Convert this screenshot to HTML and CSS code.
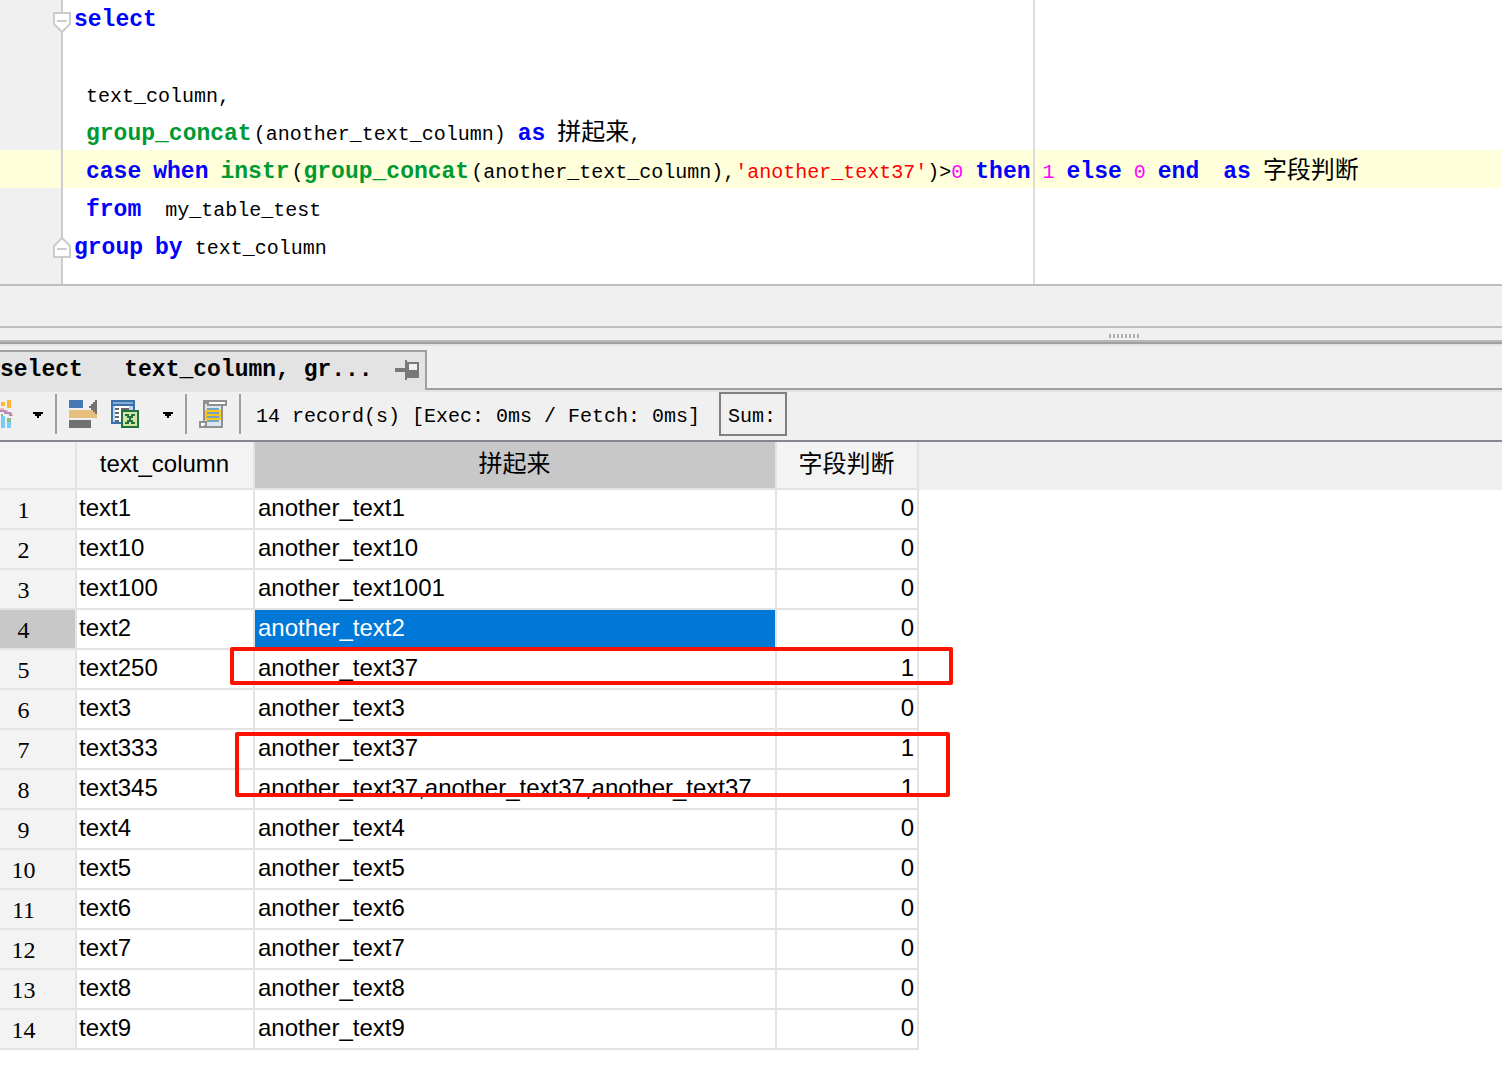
FILE: index.html
```html
<!DOCTYPE html>
<html lang="zh-CN">
<head>
    <meta charset="UTF-8">
    <meta name="viewport" content="width=device-width, initial-scale=1.0">
    <title>SQL Editor</title>
    <link rel="stylesheet" href="styles.css">
</head>
<body>

    <!-- SQL Editor -->
    <div class="editor">
        <div class="line">
            <div class="gutter">
                <svg class="fold" width="18" height="22" viewBox="0 0 18 22"><path d="M1 1h16v11l-8 8-8-8z" fill="#fff" stroke="#ccc" stroke-width="2"/><path d="M4 9h10" stroke="#ccc" stroke-width="2"/></svg>
            </div>
            <code><b class="kw">select</b></code>
        </div>
        <div class="line"><div class="gutter"></div><code></code></div>
        <div class="line"><div class="gutter"></div><code> text_column,</code></div>
        <div class="line"><div class="gutter"></div><code> <b class="fn">group_concat</b>(another_text_column) <b class="kw">as</b> <span class="cjk">拼起来</span>,</code></div>
        <div class="line current"><div class="gutter"></div><code> <b class="kw">case</b> <b class="kw">when</b> <b class="fn">instr</b>(<b class="fn">group_concat</b>(another_text_column),<span class="str">'another_text37'</span>)&gt;<span class="num">0</span> <b class="kw">then</b> <span class="num">1</span> <b class="kw">else</b> <span class="num">0</span> <b class="kw">end</b>  <b class="kw">as</b> <span class="cjk">字段判断</span></code></div>
        <div class="line"><div class="gutter"></div><code> <b class="kw">from</b>  my_table_test</code></div>
        <div class="line">
            <div class="gutter">
                <svg class="fold fold-end" width="18" height="22" viewBox="0 0 18 22"><path d="M1 21h16V10L9 2l-8 8z" fill="#fff" stroke="#ccc" stroke-width="2"/><path d="M4 13h10" stroke="#ccc" stroke-width="2"/></svg>
            </div>
            <code><b class="kw">group</b> <b class="kw">by</b> text_column</code>
        </div>
        <div class="line last"><div class="gutter"></div></div>
        <div class="right-margin"></div>
    </div>

    <div class="scroll-area"></div>
    <div class="splitter">
        <svg width="30" height="4" viewBox="0 0 30 4"><path d="M0 2h30" stroke="#b0b0b0" stroke-width="4" stroke-dasharray="2 2"/></svg>
    </div>

    <!-- Result Tab -->
    <div class="tabs">
        <button class="tab"><span>select   text_column, gr...</span><svg width="24" height="20" viewBox="0 0 24 20"><path d="M0 8h10v4H0z" fill="#787878"/><path d="M10 0h2v20h-2z" fill="#787878"/><path d="M12 2h12v16H12z" fill="#787878"/><path d="M14 4h8v6h-8z" fill="#f0f0f0"/></svg></button>
        <div class="tab-rest"></div>
    </div>

    <!-- Toolbar -->
    <div class="toolbar">
        <button class="chart-btn" aria-label="Chart">
            <svg width="13" height="28" viewBox="0 0 13 28">
                <path d="M1 2h4v4H1zM7 0h4v8H7z" fill="#ffb636"/>
                <path d="M0 9h3v2h4v2h4v2h2" fill="none" stroke="#f1b4ae" stroke-width="2"/>
                <path d="M0 11h5v2h5v2h2" fill="none" stroke="#b08bb9" stroke-width="2"/>
                <path d="M1 14h2v2H1zM7 18h4v4H7z" fill="#84bd86"/>
                <path d="M1 16h4v12H1zM7 22h4v6H7z" fill="#7ccbf7"/>
            </svg>
        </button>
        <button class="drop-btn" aria-label="Chart options"><svg width="10" height="6" viewBox="0 0 10 6"><path d="M0 0h10v2H8v2H6v2H4V4H2V2H0z"/></svg></button>
        <div class="separator"></div>
        <button class="icon-btn" aria-label="Layout">
            <svg width="28" height="28" viewBox="0 0 28 28">
                <path d="M0 0h14v8H0z" fill="#4479b3"/>
                <path d="M0 10h28v8H0z" fill="#e7c07d"/>
                <path d="M0 20h22v8H0z" fill="#717171"/>
                <path d="M28 0v14h-2v-2h-2v-2h-2V8h-2V6h2V4h2V2h2V0z" fill="#717171"/>
            </svg>
        </button>
        <button class="icon-btn" aria-label="Export">
            <svg width="28" height="28" viewBox="0 0 28 28">
                <path d="M1 1h22v22H1z" fill="#fff" stroke="#3a70ad" stroke-width="2"/>
                <path d="M1 1h22v5H1z" fill="#3a70ad"/>
                <path d="M2 3h20" stroke="#86acd2" stroke-width="2"/>
                <path d="M2 6h2v16H2zM18 6h4v6h-4z" fill="#b9d3ec"/>
                <path d="M4 9h4M4 13h4M4 17h4M4 21h4M10 9h8" stroke="#666" stroke-width="2"/>
                <path d="M11 11h16v16H11z" fill="#d2e7a4" stroke="#207245" stroke-width="2"/>
                <path d="M14 14h4v2h2v-2h4v2h-2v2h-2v2h2v2h2v2h-4v-2h-2v2h-4v-2h2v-2h2v-2h-2v-2h-2z" fill="#207245"/>
            </svg>
        </button>
        <button class="drop-btn" aria-label="Export options"><svg width="10" height="6" viewBox="0 0 10 6"><path d="M0 0h10v2H8v2H6v2H4V4H2V2H0z"/></svg></button>
        <div class="separator"></div>
        <button class="icon-btn" aria-label="SQL script">
            <svg width="28" height="28" viewBox="0 0 28 28">
                <path d="M5 1h18v26H5z" fill="#dce5f0" stroke="#909090" stroke-width="2"/>
                <path d="M7 1h20v4H9V3H7z" fill="#fff" stroke="#909090" stroke-width="2"/>
                <path d="M1 22h6v3l-2 2H1z" fill="#fff" stroke="#909090" stroke-width="2"/>
                <path d="M6 10h16v10H6z" fill="#ffc31f"/>
                <path d="M8 9h12M8 13h12M8 17h12M8 21h12" stroke="#70a5bd" stroke-width="2"/>
            </svg>
        </button>
        <div class="separator"></div>
        <span class="status">14 record(s) [Exec: 0ms / Fetch: 0ms]</span>
        <span class="sum">Sum:</span>
    </div>

    <!-- Result Grid -->
    <div class="results">
        <table>
            <colgroup>
                <col class="col-row"><col class="col-text"><col class="col-concat"><col class="col-flag">
            </colgroup>
            <thead>
                <tr><th></th><th>text_column</th><th class="active">拼起来</th><th>字段判断</th></tr>
            </thead>
            <tbody>
                <tr><th>1</th><td>text1</td><td>another_text1</td><td>0</td></tr>
                <tr><th>2</th><td>text10</td><td>another_text10</td><td>0</td></tr>
                <tr><th>3</th><td>text100</td><td>another_text1001</td><td>0</td></tr>
                <tr><th class="active">4</th><td>text2</td><td class="selected">another_text2</td><td>0</td></tr>
                <tr><th>5</th><td>text250</td><td>another_text37</td><td>1</td></tr>
                <tr><th>6</th><td>text3</td><td>another_text3</td><td>0</td></tr>
                <tr><th>7</th><td>text333</td><td>another_text37</td><td>1</td></tr>
                <tr><th>8</th><td>text345</td><td>another_text37,another_text37,another_text37</td><td>1</td></tr>
                <tr><th>9</th><td>text4</td><td>another_text4</td><td>0</td></tr>
                <tr><th>10</th><td>text5</td><td>another_text5</td><td>0</td></tr>
                <tr><th>11</th><td>text6</td><td>another_text6</td><td>0</td></tr>
                <tr><th>12</th><td>text7</td><td>another_text7</td><td>0</td></tr>
                <tr><th>13</th><td>text8</td><td>another_text8</td><td>0</td></tr>
                <tr><th>14</th><td>text9</td><td>another_text9</td><td>0</td></tr>
            </tbody>
        </table>
        <div class="mark mark-one"></div>
        <div class="mark mark-two"></div>
    </div>

</body>
</html>
```
FILE: styles.css
```css
/* General Styling */
* {
    box-sizing: border-box;
}

body {
    margin: 0;
    background-color: #fff;
    color: #000;
    font-family: "Liberation Mono", "Noto Sans CJK SC", monospace;
    font-size: 20px;
}

button {
    padding: 0;
    border: none;
    background: none;
    font: inherit;
    color: inherit;
}

svg {
    display: block;
    flex: none;
}

/* SQL Editor */
.editor {
    position: relative;
    margin-top: -2px;
    border-bottom: 2px solid #bfbfbf;
}

.line {
    display: flex;
    height: 38px;
}

.line.last {
    height: 20px;
}

.gutter {
    position: relative;
    flex: none;
    width: 63px;
    background-color: #f0f0f0;
    border-right: 2px solid #ccc;
}

.current,
.current .gutter {
    background-color: #ffffdb;
}

.fold {
    position: absolute;
    top: 14px;
    right: -10px;
}

.fold-end {
    top: 10px;
}

.line code {
    padding: 6px 0 0 11px;
    font-family: inherit;
    line-height: 34px;
    white-space: pre;
}

.line b {
    font-size: 23px;
    line-height: 1;
}

.kw {
    color: #0000ff;
}

.fn {
    margin-right: 2px;
    color: #009933;
}

.str {
    color: #ff0000;
}

.num {
    color: #ff00ff;
}

.cjk {
    font-size: 24px;
    line-height: 1;
}

.right-margin {
    position: absolute;
    top: 0;
    bottom: 0;
    left: 1033px;
    width: 2px;
    background-color: #ddd;
}

.scroll-area {
    height: 40px;
    background-color: #f0f0f0;
}

.splitter {
    display: flex;
    align-items: flex-end;
    height: 16px;
    padding: 0 0 2px 1109px;
    background-color: #f0f0f0;
    border-top: 2px solid #bfbfbf;
    border-bottom: 2px solid #b8b8b8;
}

/* Result Tab */
.tabs {
    display: flex;
    height: 50px;
    padding-top: 6px;
    background-color: #f0f0f0;
    border-top: 2px solid #a0a0a0;
    border-bottom: 2px solid #e3e3e3;
    box-shadow: inset 0 2px #e3e3e3;
}

.tab {
    display: flex;
    align-items: center;
    gap: 22px;
    width: 427px;
    padding-bottom: 2px;
    background-color: #e3e3e3;
    border-top: 2px solid #a0a0a0;
    border-right: 2px solid #a0a0a0;
    font-size: 23px;
    font-weight: bold;
    white-space: pre;
}

.tab-rest {
    flex: 1;
    border-bottom: 2px solid #a0a0a0;
}

/* Toolbar */
.toolbar {
    display: flex;
    height: 50px;
    background-color: #f0f0f0;
    border-bottom: 2px solid #828790;
}

.toolbar button {
    display: flex;
    align-items: center;
    justify-content: center;
    height: 44px;
}

.toolbar .chart-btn {
    width: 16px;
    justify-content: flex-start;
}

.toolbar .drop-btn {
    width: 24px;
    height: 46px;
    margin-left: 10px;
}

.icon-btn {
    width: 42px;
}

.separator {
    width: 2px;
    height: 40px;
    margin: 2px 5px;
    background-color: #a0a0a0;
}

.status {
    margin: 0 19px 0 10px;
    line-height: 50px;
    white-space: nowrap;
}

.sum {
    width: 68px;
    height: 44px;
    padding-left: 7px;
    border: 2px solid #808080;
    line-height: 46px;
}

/* Result Grid */
.results {
    position: relative;
    background: linear-gradient(#f0f0f0 48px, #fff 48px);
}

table {
    width: 919px;
    table-layout: fixed;
    border-spacing: 0;
    font-family: "Liberation Sans", "Noto Sans CJK SC", sans-serif;
    font-size: 24px;
}

.col-row {
    width: 77px;
}

.col-text {
    width: 178px;
}

.col-concat {
    width: 522px;
}

.col-flag {
    width: 142px;
}

th,
td {
    height: 40px;
    padding: 0 3px 3px 2px;
    border-right: 2px solid #e3e3e3;
    border-bottom: 2px solid #e3e3e3;
    line-height: 34px;
    text-align: left;
    white-space: nowrap;
}

th {
    background-color: #f3f3f3;
    font-weight: normal;
}

thead th {
    height: 48px;
    text-align: center;
}

tbody th {
    padding: 2px 28px 0 0;
    font-family: "Liberation Serif", serif;
    text-align: center;
}

td {
    background-color: #fff;
}

td:nth-child(3) {
    padding-left: 3px;
}

td:last-child {
    text-align: right;
}

th.active {
    background-color: #c8c8c8;
}

td.selected {
    background-color: #0078d7;
    color: #fff;
}

/* Red frames over the matching rows */
.mark {
    position: absolute;
    border: 4px solid #ff1100;
    border-radius: 2px;
}

.mark-one {
    top: 205px;
    left: 230px;
    width: 723px;
    height: 38px;
}

.mark-two {
    top: 290px;
    left: 235px;
    width: 715px;
    height: 65px;
}
```
